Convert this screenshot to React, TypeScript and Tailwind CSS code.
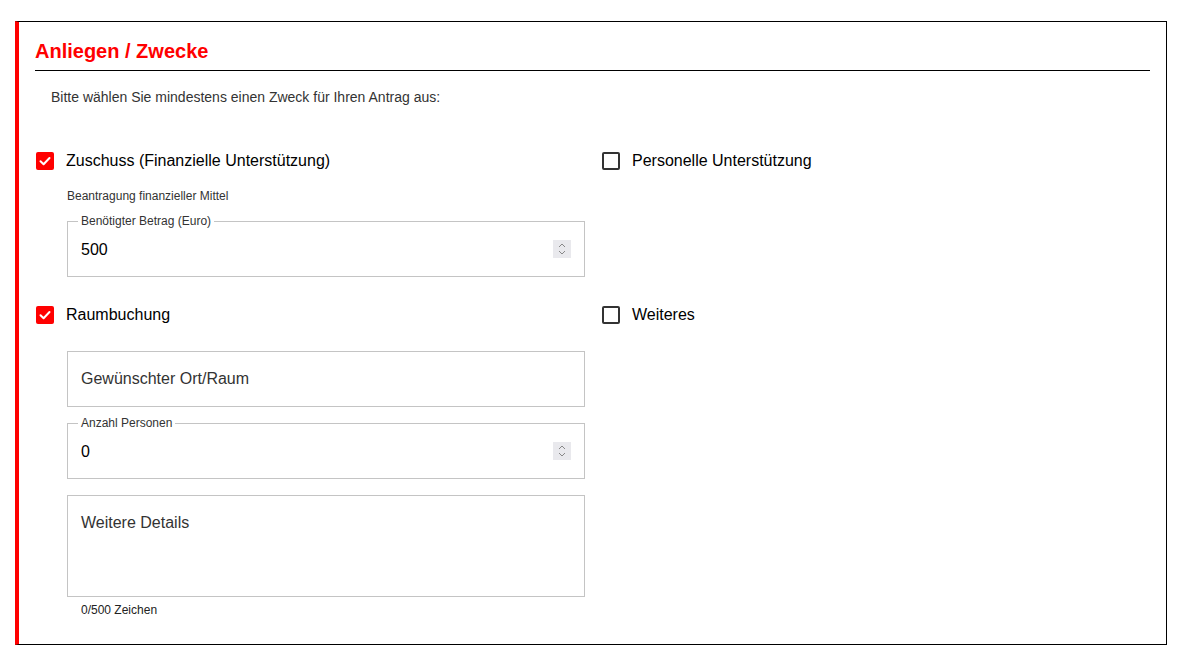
import React from "react"

const font = { fontFamily: '"Liberation Sans", Arial, sans-serif' }

function Checkbox({ checked, label }: { checked?: boolean; label: string }) {
  return (
    <div className="flex items-center h-6 gap-3 ml-px">
      {checked ? (
        <span className="w-[18px] h-[18px] rounded-[2px] bg-[#ff0000] flex items-center justify-center">
          <svg width="14" height="14" viewBox="0 0 14 14" fill="none">
            <path d="M2.5 7.2 L5.6 10.2 L11.5 4" stroke="white" strokeWidth="2" strokeLinecap="round" strokeLinejoin="round" />
          </svg>
        </span>
      ) : (
        <span className="w-[18px] h-[18px] rounded-[2px] border-2 border-[#333]" />
      )}
      <span className="text-base text-black">{label}</span>
    </div>
  )
}

function Spinner() {
  return (
    <span className="w-[18px] h-[18px] bg-[#e9e9ed] flex flex-col items-center justify-center gap-[2px]">
      <svg width="8" height="5" viewBox="0 0 8 5" fill="none">
        <path d="M1 4 L4 1 L7 4" stroke="#888" strokeWidth="1" />
      </svg>
      <svg width="8" height="5" viewBox="0 0 8 5" fill="none">
        <path d="M1 1 L4 4 L7 1" stroke="#888" strokeWidth="1" />
      </svg>
    </span>
  )
}

function NumberField({ label, value }: { label: string; value: string }) {
  return (
    <div className="relative w-[518px] h-14 border border-[#c4c4c4] flex items-center justify-between pl-[13px] pr-[13px]">
      <span className="absolute left-[10px] -top-[9px] bg-white px-[3px] text-xs leading-4 text-[#333]">{label}</span>
      <span className="text-base text-black pt-[2px]">{value}</span>
      <Spinner />
    </div>
  )
}

export default function App() {
  return (
    <div className="bg-white w-[1182px] h-[669px] pt-[21px] pl-[15px]" style={font}>
      <div className="w-[1152px] border border-black border-l-4 border-l-[#ff0000] px-4 pb-[26px]">
        <h2 className="mt-[15px] h-[34px] leading-7 text-xl font-bold text-[#ff0000] border-b border-black pb-[5px]">
          Anliegen / Zwecke
        </h2>
        <p className="mt-4 ml-4 text-sm leading-5 text-[#333]">
          Bitte wählen Sie mindestens einen Zweck für Ihren Antrag aus:
        </p>

        <div className="mt-[42px] grid grid-cols-[566px_1fr] gap-y-[26px]">
          <div>
            <Checkbox checked label="Zuschuss (Finanzielle Unterstützung)" />
            <div className="ml-8 mt-[15px] text-xs leading-4 text-[#333]">Beantragung finanzieller Mittel</div>
            <div className="ml-8 mt-[17px]">
              <NumberField label="Benötigter Betrag (Euro)" value="500" />
            </div>
          </div>
          <div>
            <Checkbox label="Personelle Unterstützung" />
          </div>

          <div>
            <Checkbox checked label="Raumbuchung" />
            <div className="ml-8 mt-6 flex flex-col gap-4">
              <div className="w-[518px] h-14 border border-[#c4c4c4] flex items-center px-[13px] text-base text-[#333]">
                Gewünschter Ort/Raum
              </div>
              <NumberField label="Anzahl Personen" value="0" />
              <div>
                <div className="w-[518px] h-[102px] border border-[#c4c4c4] px-[13px] pt-[17px] text-base leading-5 text-[#333]">
                  Weitere Details
                </div>
                <div className="mt-[5px] ml-[14px] text-xs leading-4 text-[#222]">0/500 Zeichen</div>
              </div>
            </div>
          </div>
          <div>
            <Checkbox label="Weiteres" />
          </div>
        </div>
      </div>
    </div>
  )
}
